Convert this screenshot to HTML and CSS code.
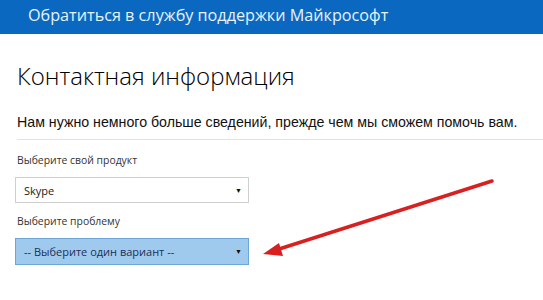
FILE: index.html
```html
<!DOCTYPE html>
<html lang="ru">
  <head>
    <meta charset="UTF-8" />
    <meta name="viewport" content="width=device-width, initial-scale=1.0" />
    <link rel="stylesheet" href="styles.css">
  </head>
  <body>
    <div class="topbar">Обратиться в службу поддержки Майкрософт</div>

    <div class="content">
      <h1 class="title">Контактная информация</h1>
      <p class="lead">Нам нужно немного больше сведений, прежде чем мы сможем помочь вам.</p>

      <div class="field">
        <label class="label">Выберите свой продукт</label>
        <div class="select">
          <span>Skype</span>
          <span class="caret">&#9660;</span>
        </div>
      </div>

      <div class="field">
        <label class="label">Выберите проблему</label>
        <div class="select active">
          <span>-- Выберите один вариант --</span>
          <span class="caret">&#9660;</span>
        </div>
      </div>
    </div>

    <!-- стрелка-указатель -->
    <svg class="pointer" width="543" height="300" viewBox="0 0 543 300">
      <line x1="492" y1="181" x2="276" y2="250" stroke="#d7201f" stroke-width="3.5" stroke-linecap="round" />
      <polygon points="263,254 279,243 283,256" fill="#d7201f" />
    </svg>
  </body>
</html>
```

FILE: styles.css
```css
body {
  margin: 0;
  background-color: #fff;
  font-family: "Open Sans", Arial, sans-serif;
  position: relative;
  height: 300px;
  overflow: hidden;
}

.topbar {
  height: 34px;
  line-height: 31px;
  padding-left: 28px;
  background-color: #0b68c0;
  color: #e6f3fb;
  font-size: 16.2px;
}

.content {
  padding-left: 15px;
}

.title {
  margin: 27px 0 0 2px;
  font-size: 24px;
  font-weight: 300;
  line-height: 30px;
  color: #000;
}

.lead {
  margin: 22px 0 0 2px;
  padding-bottom: 8px;
  border-bottom: 1px solid #e2e2e2;
  font-family: "Liberation Sans", Arial, sans-serif;
  font-size: 14.2px;
  line-height: 18px;
  white-space: nowrap;
  color: #111;
}

.field {
  margin-top: 13px;
}

.field + .field {
  margin-top: 11px;
}

.label {
  display: block;
  margin-left: 2px;
  font-size: 10.4px;
  line-height: 15px;
  color: #333;
}

.select {
  display: flex;
  justify-content: space-between;
  align-items: center;
  box-sizing: border-box;
  width: 234px;
  height: 26px;
  margin-top: 9px;
  padding: 0 6px 0 8px;
  border: 1px solid #cfcfcf;
  font-size: 11px;
  color: #222;
}

.select.active {
  height: 27px;
  background-color: #9fcaee;
  border-color: #6aa6d8;
  color: #1d2f55;
}

.caret {
  font-size: 7px;
  color: #111;
}

.pointer {
  position: absolute;
  top: 0;
  left: 0;
}
```
